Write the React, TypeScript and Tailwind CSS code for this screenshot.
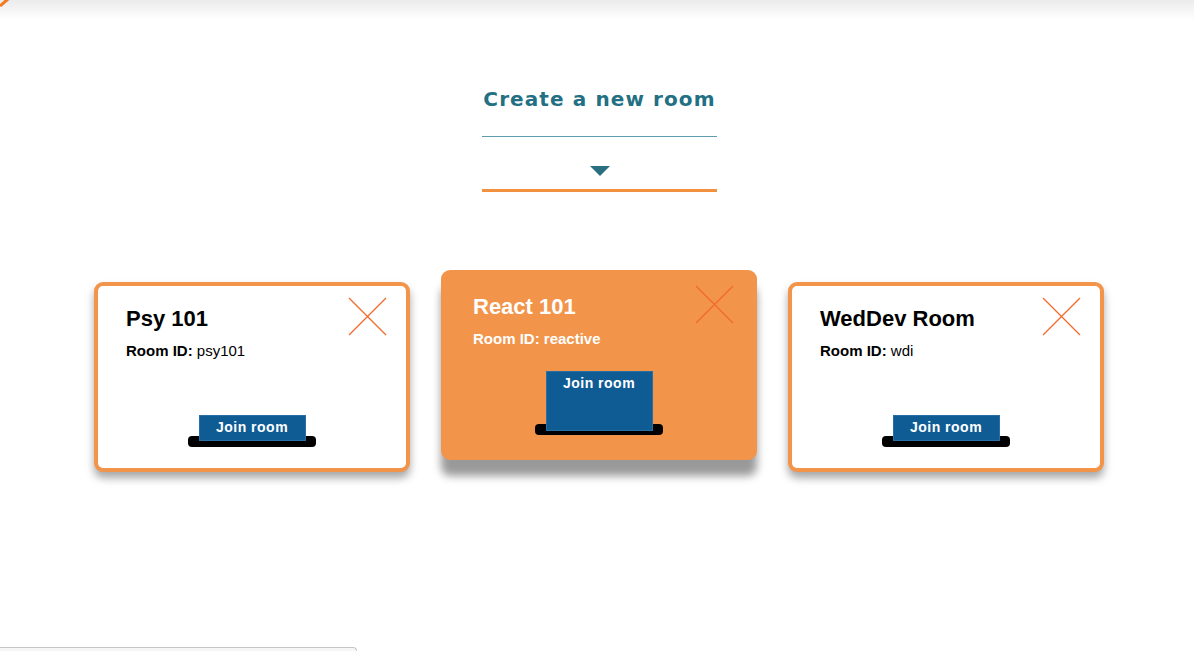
import { useState } from "react";

const rooms = [
  { name: "Psy 101", id: "psy101" },
  { name: "React 101", id: "reactive" },
  { name: "WedDev Room", id: "wdi" },
];

const CloseIcon = () => (
  <svg width="39" height="39" viewBox="0 0 39 39" fill="none">
    <line x1="1" y1="1" x2="38" y2="38" stroke="#f2692c" strokeWidth="1.3" />
    <line x1="38" y1="1" x2="1" y2="38" stroke="#f2692c" strokeWidth="1.3" />
  </svg>
);

const RoomCard = ({ name, id, active }: { name: string; id: string; active: boolean }) => {
  return (
    <div
      className={`relative flex flex-col w-[316px] h-[190px] rounded-[9px] border-4 border-[#f2944a] px-[28px] pt-[20px] pb-[21px] ${
        active
          ? "bg-[#f2944a] text-white -translate-y-[12px] shadow-[0_16px_8px_rgba(0,0,0,0.4)]"
          : "bg-white text-black shadow-[0_6px_8px_rgba(0,0,0,0.35)]"
      }`}
    >
      <button className="absolute top-[11px] right-[19px]">
        <CloseIcon />
      </button>
      <h3 className="text-[22px] leading-[26px] font-bold">{name}</h3>
      <p className="mt-[9px] text-[15px] leading-[20px]">
        <span className="font-bold">Room ID:</span>{" "}
        <span className={active ? "font-bold" : ""}>{id}</span>
      </p>
      <div className={`relative mt-auto self-center w-[128px] ${active ? "h-[64px]" : "h-[32px]"}`}>
        <div className="absolute bottom-0 left-0 w-full h-[11px] rounded-[4px] bg-black" />
        <button
          className={`relative flex items-start justify-center mx-auto w-[107px] ${
            active ? "h-[60px]" : "h-[26px]"
          } bg-[#0f5b94] border border-[#2a6fa3] pt-[1px] text-white text-[14px] leading-[20px] font-bold tracking-[0.5px]`}
        >
          Join room
        </button>
      </div>
    </div>
  );
};

const App = () => {
  const [activeRoom] = useState("reactive");

  return (
    <div className="flex flex-col h-[651px] overflow-hidden bg-white font-['Liberation_Sans',Arial,sans-serif]">
      <div className="relative h-[20px] bg-gradient-to-b from-[#ebebeb] to-white">
        <svg className="absolute top-0 left-0" width="10" height="7" viewBox="0 0 10 7">
          <line x1="0" y1="6" x2="8" y2="-1" stroke="#f47a20" strokeWidth="3" />
        </svg>
      </div>

      <div className="mt-[67px] flex justify-center pl-[5px]">
        <div className="w-[235px] flex flex-col items-center">
          <h2 className="w-full whitespace-nowrap text-center border-b border-[#5e9db0] pb-[25px] text-[20px] leading-[24px] font-bold tracking-[1.1px] text-[#236f83] font-['DejaVu_Sans',sans-serif]">
            Create a new room
          </h2>
          <div className="mt-[29px] w-0 h-0 border-l-[10px] border-r-[10px] border-t-[10px] border-l-transparent border-r-transparent border-t-[#2a6f80]" />
          <div className="mt-[13px] w-full h-[3px] bg-[#f2913f]" />
        </div>
      </div>

      <div className="mt-[90px] flex justify-center gap-[31px] pl-[4px]">
        {rooms.map((room) => (
          <RoomCard key={room.id} name={room.name} id={room.id} active={room.id === activeRoom} />
        ))}
      </div>

      <div className="mt-auto w-[357px] h-[4px] border-t border-r border-[#c6c6c6] rounded-tr-[4px] bg-[#f6f6f6]" />
    </div>
  );
};

export default App;
